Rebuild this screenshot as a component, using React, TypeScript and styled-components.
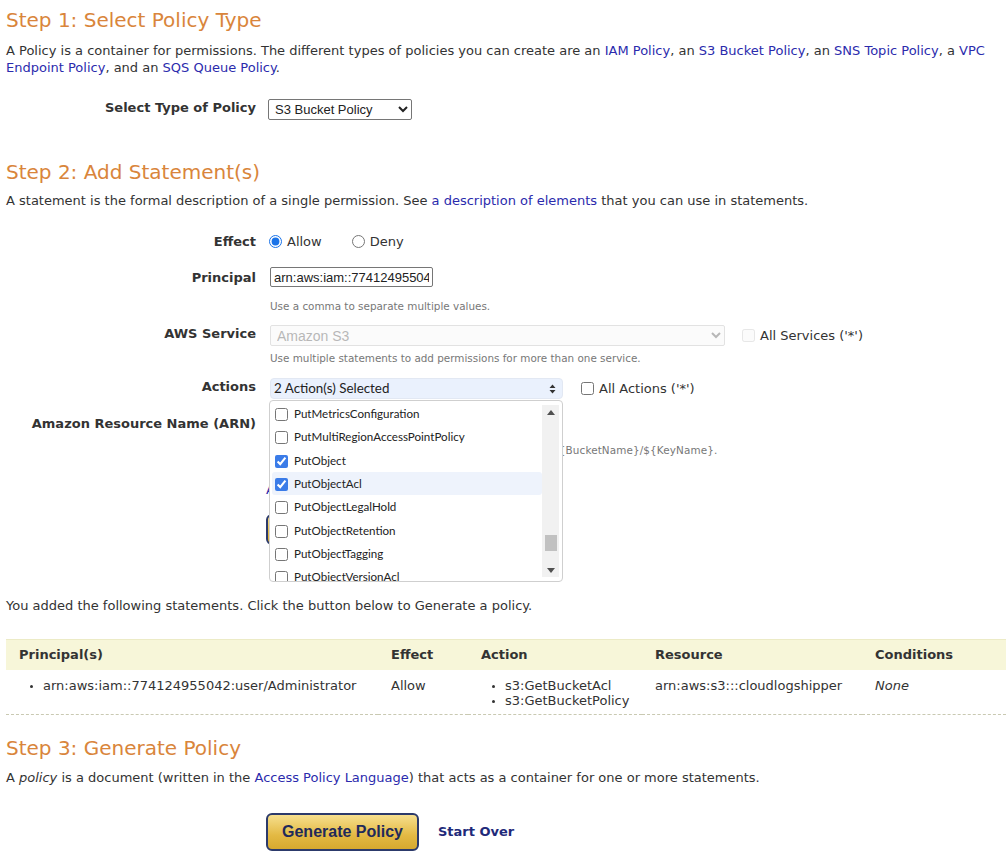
import React from 'react';
import styled, { createGlobalStyle } from 'styled-components';

const GlobalStyle = createGlobalStyle`
  body {
    margin: 0;
    background: #ffffff;
    font-family: "DejaVu Sans", Verdana, sans-serif;
    color: #333333;
  }
`;

const Page = styled.div`
  padding: 0 0 0 6px;
  width: 1000px;
  font-size: 13px;
  line-height: 17px;
`;

const StepTitle = styled.h2<{ $top: number }>`
  margin: ${(p) => p.$top}px 0 0;
  font-size: 20px;
  line-height: 24px;
  font-weight: normal;
  color: #d9853b;
`;

const Para = styled.p<{ $top: number }>`
  margin: ${(p) => p.$top}px 0 0;
  font-size: 13px;
  line-height: 17px;
  color: #333333;
`;

const Link = styled.a`
  color: #2b2bad;
  text-decoration: none;
`;

const FormGrid = styled.div<{ $top: number }>`
  margin-top: ${(p) => p.$top}px;
  display: grid;
  grid-template-columns: 250px 1fr;
  column-gap: 14px;
  position: relative;
`;

const Label = styled.div<{ $h: number }>`
  text-align: right;
  font-weight: bold;
  font-size: 13px;
  height: ${(p) => p.$h}px;
  color: #333333;
`;

const Field = styled.div<{ $h: number }>`
  height: ${(p) => p.$h}px;
  display: flex;
  flex-direction: column;
  align-items: flex-start;
`;

const FieldLine = styled.div<{ $top?: number; $left?: number }>`
  display: flex;
  align-items: center;
  margin-top: ${(p) => p.$top ?? 0}px;
  margin-left: ${(p) => p.$left ?? 0}px;
`;

const Hint = styled.div<{ $top: number; $spacing?: number }>`
  font-size: 10.4px;
  line-height: 13px;
  color: #777777;
  margin-top: ${(p) => p.$top}px;
  letter-spacing: ${(p) => p.$spacing ?? 0}px;
  white-space: nowrap;
`;

const NativeSelect = styled.select<{ $w: number }>`
  width: ${(p) => p.$w}px;
  height: 21px;
  font-family: "Liberation Sans", Arial, sans-serif;
  font-size: 13px;
  color: #222;
  border: 1px solid #767676;
  border-radius: 2px;
  background: #fff;
  padding: 0 2px;
`;

const DisabledSelect = styled(NativeSelect)`
  border-color: #d6d6d6;
  color: #9a9a9a;
  background: #fafafa;
  font-size: 14px;
`;

const TextInput = styled.input<{ $w: number }>`
  width: ${(p) => p.$w}px;
  height: 20px;
  box-sizing: border-box;
  font-family: "Liberation Sans", Arial, sans-serif;
  font-size: 13px;
  border: 1px solid #767676;
  border-radius: 2px;
  padding: 0 3px;
  color: #222;
`;

const Radio = styled.label<{ $gap: number }>`
  display: inline-flex;
  align-items: center;
  gap: 5px;
  margin-right: ${(p) => p.$gap}px;
  font-size: 13px;
  input {
    margin: 0 0 0 -1px;
    width: 13px;
    height: 13px;
    accent-color: #1a73e8;
  }
`;

const Check = styled.label<{ $left: number; $muted?: boolean }>`
  display: inline-flex;
  align-items: center;
  gap: 5px;
  margin-left: ${(p) => p.$left}px;
  font-size: 13px;
  color: #333;
  input {
    margin: 0;
    width: 13px;
    height: 13px;
    opacity: ${(p) => (p.$muted ? 0.5 : 1)};
  }
`;

const MultiButton = styled.div`
  width: 293px;
  height: 21px;
  box-sizing: border-box;
  border: 1px solid #e2e8f3;
  border-radius: 4px;
  background: #eaf1fd;
  display: flex;
  align-items: center;
  justify-content: space-between;
  padding: 0 6px 0 3px;
  font-family: Lato, "Open Sans", sans-serif;
  font-size: 13.4px;
  color: #222;
`;

const Menu = styled.div`
  position: absolute;
  left: 263px;
  top: 167px;
  width: 294px;
  height: 182px;
  box-sizing: border-box;
  background: #fff;
  border: 1px solid #cfcfcf;
  border-radius: 4px;
  overflow: hidden;
  z-index: 2;
  display: flex;
  font-family: Lato, "Open Sans", sans-serif;
  font-size: 11.6px;
  color: #222;
`;

const MenuList = styled.div`
  flex: 1;
  padding: 0 0 0 2px;
  margin-top: 1px;
`;

const MenuItem = styled.label<{ $active?: boolean }>`
  display: flex;
  align-items: center;
  gap: 6px;
  height: 23.3px;
  padding-left: 3px;
  border-radius: 3px;
  background: ${(p) => (p.$active ? '#eef3fc' : 'transparent')};
  input {
    margin: 2px 0 0;
    width: 13px;
    height: 13px;
    accent-color: #3b7ce8;
  }
`;

const ScrollTrack = styled.div`
  width: 17px;
  margin: 4px 3px 4px 0;
  background: #f1f1f1;
  display: flex;
  flex-direction: column;
  align-items: center;
  justify-content: space-between;
  position: relative;
`;

const Thumb = styled.div`
  position: absolute;
  left: 3px;
  top: 130px;
  width: 12px;
  height: 16px;
  background: #c1c1c1;
`;

const Arrow = styled.div`
  height: 14px;
  display: flex;
  align-items: center;
`;

const GoldButton = styled.button<{ $w: number; $h: number; $size: number }>`
  width: ${(p) => p.$w}px;
  height: ${(p) => p.$h}px;
  border: 2px solid #2c3a6b;
  border-radius: 6px;
  background: linear-gradient(#f6df8e, #e3b943 60%, #d7a92f);
  color: #1f2a5a;
  font-family: "Liberation Sans", Arial, sans-serif;
  font-weight: bold;
  font-size: ${(p) => p.$size}px;
  padding: 0;
  cursor: pointer;
`;

const Table = styled.table`
  width: 1000px;
  margin-top: 25px;
  border-collapse: collapse;
  table-layout: fixed;
  font-size: 13px;
`;

const Th = styled.th<{ $w: number }>`
  width: ${(p) => p.$w}px;
  box-sizing: border-box;
  background: #f7f6d9;
  border-top: 1px solid #ecebc6;
  height: 30px;
  text-align: left;
  padding: 0 0 0 13px;
  font-weight: bold;
  color: #333;
`;

const Td = styled.td`
  vertical-align: top;
  padding: 8px 0 6px 13px;
  line-height: 15px;
  border-bottom: 1px dashed #c9c9b2;
  color: #333;
`;

const Bullets = styled.ul`
  margin: 0;
  padding-left: 24px;
  list-style: disc;
  li::marker {
    font-size: 10px;
  }
`;

const ButtonRow = styled.div`
  display: flex;
  align-items: center;
  gap: 19px;
  margin: 27px 0 0 260px;
  padding-bottom: 20px;
`;

const BoldLink = styled.a`
  color: #1f2a7a;
  font-weight: bold;
  font-size: 13px;
  text-decoration: none;
`;

const actions = [
  { name: 'PutMetricsConfiguration', checked: false },
  { name: 'PutMultiRegionAccessPointPolicy', checked: false },
  { name: 'PutObject', checked: true },
  { name: 'PutObjectAcl', checked: true, active: true },
  { name: 'PutObjectLegalHold', checked: false },
  { name: 'PutObjectRetention', checked: false },
  { name: 'PutObjectTagging', checked: false },
  { name: 'PutObjectVersionAcl', checked: false },
];

const App: React.FC = () => {
  return (
    <Page>
      <GlobalStyle />
      <StepTitle $top={8}>Step 1: Select Policy Type</StepTitle>
      <Para $top={10}>
        A Policy is a container for permissions. The different types of policies you can create are an{' '}
        <Link href="#">IAM Policy</Link>, an <Link href="#">S3 Bucket Policy</Link>, an{' '}
        <Link href="#">SNS Topic Policy</Link>, a <Link href="#">VPC Endpoint Policy</Link>, and an{' '}
        <Link href="#">SQS Queue Policy</Link>.
      </Para>

      <FormGrid $top={23}>
        <Label $h={61}>Select Type of Policy</Label>
        <Field $h={61}>
          <FieldLine $left={-2}>
            <NativeSelect $w={144} defaultValue="s3">
              <option value="s3">S3 Bucket Policy</option>
            </NativeSelect>
          </FieldLine>
        </Field>
      </FormGrid>

      <StepTitle $top={0}>Step 2: Add Statement(s)</StepTitle>
      <Para $top={8}>
        A statement is the formal description of a single permission. See{' '}
        <Link href="#">a description of elements</Link> that you can use in statements.
      </Para>

      <FormGrid $top={24}>
        <Label $h={36}>Effect</Label>
        <Field $h={36}>
          <FieldLine>
            <Radio $gap={31}>
              <input type="radio" name="effect" defaultChecked /> Allow
            </Radio>
            <Radio $gap={0}>
              <input type="radio" name="effect" /> Deny
            </Radio>
          </FieldLine>
        </Field>

        <Label $h={56}>Principal</Label>
        <Field $h={56}>
          <FieldLine $top={-2}>
            <TextInput $w={163} defaultValue="arn:aws:iam::774124955042:user/Administrator" />
          </FieldLine>
          <Hint $top={13}>Use a comma to separate multiple values.</Hint>
        </Field>

        <Label $h={53}>AWS Service</Label>
        <Field $h={53}>
          <FieldLine>
            <DisabledSelect $w={455} disabled defaultValue="s3">
              <option value="s3">Amazon S3</option>
            </DisabledSelect>
            <Check $left={17} $muted>
              <input type="checkbox" disabled /> All Services ('*')
            </Check>
          </FieldLine>
          <Hint $top={6}>Use multiple statements to add permissions for more than one service.</Hint>
        </Field>

        <Label $h={37}>Actions</Label>
        <Field $h={37}>
          <FieldLine>
            <MultiButton>
              <span>2 Action(s) Selected</span>
              <svg width="7" height="10" viewBox="0 0 7 10">
                <path d="M3.5 0.5 L6.5 4 L0.5 4 Z M3.5 9.5 L6.5 6 L0.5 6 Z" fill="#333" />
              </svg>
            </MultiButton>
            <Check $left={18}>
              <input type="checkbox" /> All Actions ('*')
            </Check>
          </FieldLine>
        </Field>

        <Label $h={66}>Amazon Resource Name (ARN)</Label>
        <Field $h={66}>
          <FieldLine $top={-2}>
            <TextInput $w={290} />
          </FieldLine>
          <Hint $top={11} $spacing={0.12}>
            ARN should follow the following format: arn:aws:s3:::${'{BucketName}'}/${'{KeyName}'}.
          </Hint>
        </Field>

        <Label $h={23} />
        <Field $h={23}>
          <FieldLine $left={-4}>
            <Link href="#">Add Conditions (Optional)</Link>
          </FieldLine>
        </Field>

        <Label $h={93} />
        <Field $h={93}>
          <FieldLine $left={-4} $top={10}>
            <GoldButton $w={130} $h={31} $size={14}>Add Statement</GoldButton>
          </FieldLine>
        </Field>

        <Menu>
          <MenuList>
            {actions.map((a) => (
              <MenuItem key={a.name} $active={a.active}>
                <input type="checkbox" defaultChecked={a.checked} />
                {a.name}
              </MenuItem>
            ))}
          </MenuList>
          <ScrollTrack>
            <Arrow>
              <svg width="8" height="5" viewBox="0 0 8 5">
                <path d="M4 0 L8 5 L0 5 Z" fill="#505050" />
              </svg>
            </Arrow>
            <Thumb />
            <Arrow>
              <svg width="8" height="5" viewBox="0 0 8 5">
                <path d="M0 0 L8 0 L4 5 Z" fill="#505050" />
              </svg>
            </Arrow>
          </ScrollTrack>
        </Menu>
      </FormGrid>

      <Para $top={0}>You added the following statements. Click the button below to Generate a policy.</Para>

      <Table>
        <thead>
          <tr>
            <Th $w={372}>Principal(s)</Th>
            <Th $w={90}>Effect</Th>
            <Th $w={174}>Action</Th>
            <Th $w={220}>Resource</Th>
            <Th $w={144}>Conditions</Th>
          </tr>
        </thead>
        <tbody>
          <tr>
            <Td>
              <Bullets>
                <li>arn:aws:iam::774124955042:user/Administrator</li>
              </Bullets>
            </Td>
            <Td>Allow</Td>
            <Td>
              <Bullets>
                <li>s3:GetBucketAcl</li>
                <li>s3:GetBucketPolicy</li>
              </Bullets>
            </Td>
            <Td>arn:aws:s3:::cloudlogshipper</Td>
            <Td>
              <i>None</i>
            </Td>
          </tr>
        </tbody>
      </Table>

      <StepTitle $top={21}>Step 3: Generate Policy</StepTitle>
      <Para $top={9}>
        A <i>policy</i> is a document (written in the <Link href="#">Access Policy Language</Link>) that acts as a
        container for one or more statements.
      </Para>

      <ButtonRow>
        <GoldButton $w={153} $h={38} $size={16}>Generate Policy</GoldButton>
        <BoldLink href="#">Start Over</BoldLink>
      </ButtonRow>
    </Page>
  );
};

export default App;
